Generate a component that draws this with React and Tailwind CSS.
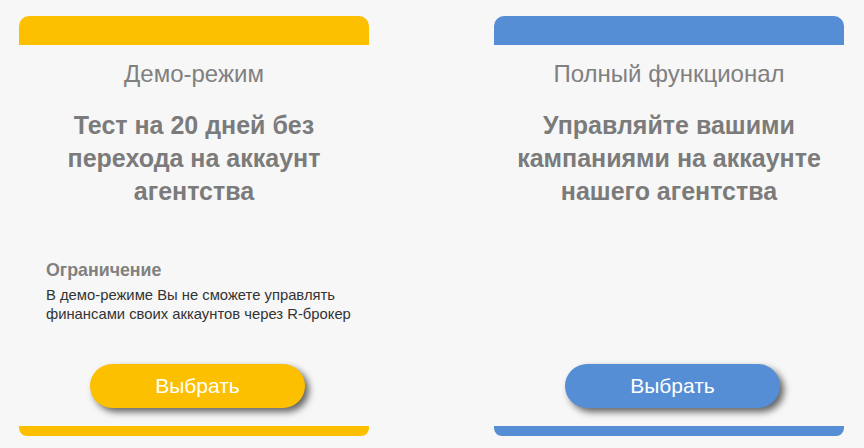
const plans = [
  {
    title: "Демо-режим",
    heading: ["Тест на 20 дней без", "перехода на аккаунт", "агентства"],
    color: "bg-[#fdc000]",
    note: {
      label: "Ограничение",
      text: ["В демо-режиме Вы не сможете управлять", "финансами своих аккаунтов через R-брокер"],
    },
  },
  {
    title: "Полный функционал",
    heading: ["Управляйте вашими", "кампаниями на аккаунте", "нашего агентства"],
    color: "bg-[#568ed6]",
  },
]

const PlanCard = ({ plan }) => {
  return (
    <div className="w-[350px] h-[420px] flex flex-col">
      <div className={`h-[29px] rounded-t-[10px] ${plan.color}`} />
      <div className="mt-[15px] text-center text-[24px] leading-[28px] text-[#808080]">{plan.title}</div>
      <h2 className="mt-[21px] text-center text-[25px] leading-[33px] font-bold text-[#7b7b7b]">
        {plan.heading.map((line) => (
          <div key={line}>{line}</div>
        ))}
      </h2>
      {plan.note && (
        <div className="mt-[52px] pl-[27px]">
          <div className="text-[17.8px] leading-[21px] font-bold text-[#808080]">{plan.note.label}</div>
          <div className="mt-[5px] text-[14.8px] leading-[19px] text-[#333]">
            {plan.note.text.map((line) => (
              <div key={line}>{line}</div>
            ))}
          </div>
        </div>
      )}
      <div className="mt-auto flex justify-center pl-[7px]">
        <button
          className={`w-[215px] h-[44px] rounded-full text-white text-[21px] shadow-[4px_4px_7px_rgba(0,0,0,0.6)] ${plan.color}`}
        >
          Выбрать
        </button>
      </div>
      <div className={`mt-[18px] h-[10px] rounded-b-[8px] ${plan.color}`} />
    </div>
  )
}

export default function App() {
  return (
    <div
      className="w-[864px] h-[448px] bg-[#f7f7f7] flex gap-[125px] pl-[19px] pt-[16px]"
      style={{ fontFamily: '"Liberation Sans", Arial, sans-serif' }}
    >
      {plans.map((plan) => (
        <PlanCard key={plan.title} plan={plan} />
      ))}
    </div>
  )
}
